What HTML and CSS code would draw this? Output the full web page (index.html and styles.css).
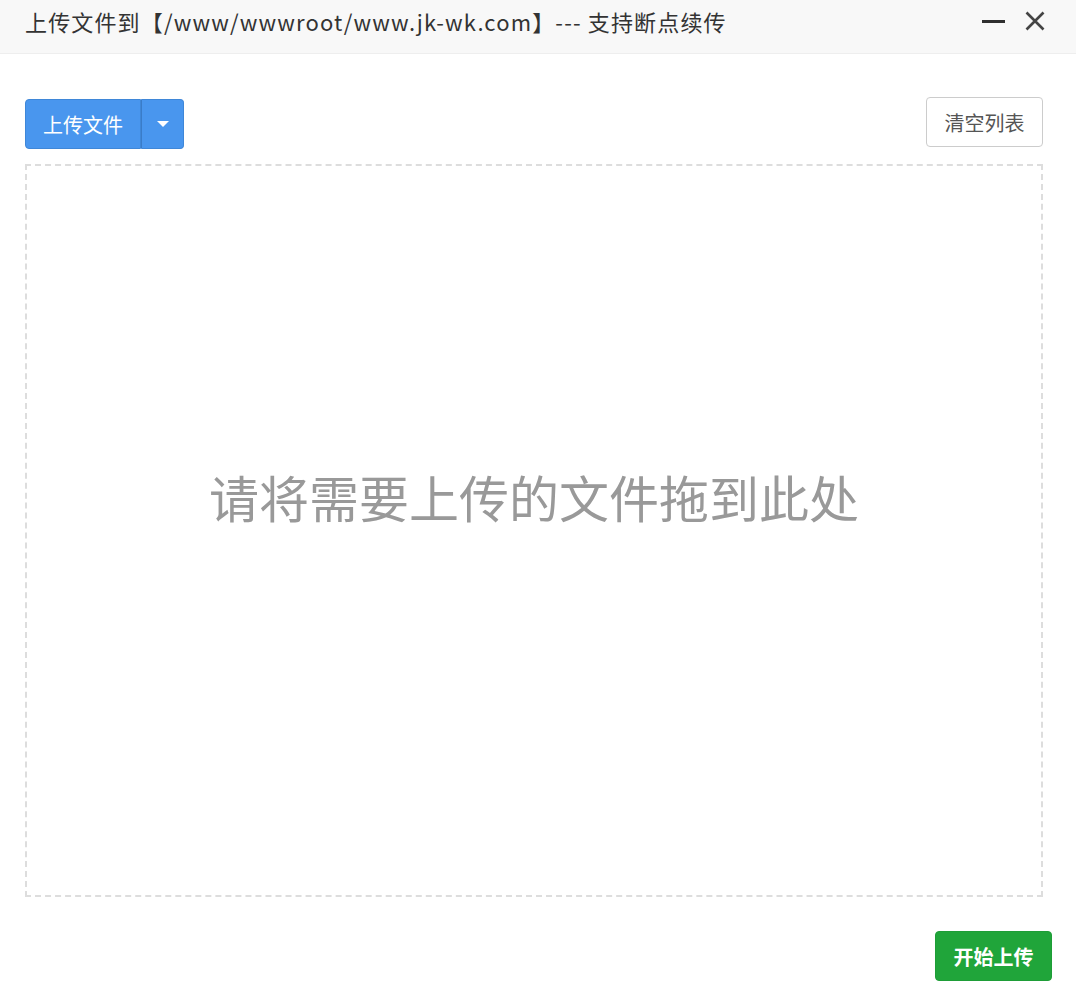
FILE: index.html
```html
<!DOCTYPE html>
<html lang="zh-CN">
<head>
    <meta charset="UTF-8">
    <title>上传文件</title>
    <link rel="stylesheet" href="styles.css">
</head>
<body>
    <div class="dialog">
        <div class="dialog-title">
            <span class="title-text">上传文件到【/www/wwwroot/www.jk-wk.com】--- 支持断点续传</span>
            <div class="title-tools">
                <span class="tool-min"></span>
                <svg class="tool-close" width="20" height="20" viewBox="0 0 20 20">
                    <path d="M1.5 1.5 L18.5 18.5 M18.5 1.5 L1.5 18.5" stroke="#444" stroke-width="2.6" fill="none"/>
                </svg>
            </div>
        </div>
        <div class="dialog-body">
            <div class="toolbar">
                <div class="btn-group">
                    <button class="btn btn-blue">上传文件</button>
                    <button class="btn btn-blue btn-caret"><span class="caret"></span></button>
                </div>
                <button class="btn btn-default">清空列表</button>
            </div>
            <div class="drop-zone">
                <span>请将需要上传的文件拖到此处</span>
            </div>
        </div>
        <div class="dialog-footer">
            <button class="btn btn-green">开始上传</button>
        </div>
    </div>
</body>
</html>
```

FILE: styles.css
```css
html, body {
    margin: 0;
    padding: 0;
    background: #fff;
}

body {
    font-family: "Noto Sans CJK SC", "Noto Sans", sans-serif;
    color: #333;
}

.dialog {
    width: 1076px;
    height: 993px;
    display: flex;
    flex-direction: column;
}

.dialog-title {
    height: 54px;
    background: #f8f8f8;
    border-bottom: 1px solid #eee;
    display: flex;
    align-items: center;
    justify-content: space-between;
    padding: 0 31px 0 25px;
    box-sizing: border-box;
}

.title-text {
    font-size: 22px;
    letter-spacing: 1.15px;
    color: #333;
    margin-top: -12px;
}

.title-tools {
    display: flex;
    align-items: center;
    gap: 20px;
    margin-top: -11px;
}

.tool-min {
    display: block;
    width: 23px;
    height: 3px;
    background: #2f2f2f;
}

.tool-close {
    display: block;
    width: 20px;
    height: 20px;
}

.dialog-body {
    padding: 43px 33px 0 25px;
}

.toolbar {
    display: flex;
    justify-content: space-between;
    align-items: flex-start;
    margin-bottom: 15px;
}

.btn-group {
    display: flex;
    margin-top: 2px;
}

.btn {
    font-family: inherit;
    border: 1px solid transparent;
    border-radius: 4px;
    cursor: pointer;
    font-size: 20px;
    padding: 0;
    height: 50px;
}

.btn-blue {
    background: #4996ee;
    border-color: #3f87d8;
    color: #fff;
    width: 116px;
    border-radius: 4px 0 0 4px;
}

.btn-caret {
    width: 43px;
    border-left: 1px solid #3a7cc8;
    border-radius: 0 4px 4px 0;
    display: flex;
    align-items: center;
    justify-content: center;
}

.caret {
    width: 0;
    height: 0;
    border-left: 6px solid transparent;
    border-right: 6px solid transparent;
    border-top: 6px solid #fff;
}

.btn-default {
    background: #fff;
    border-color: #ccc;
    color: #555;
    width: 117px;
}

.drop-zone {
    height: 733px;
    border: 2px dashed #ddd;
    box-sizing: border-box;
    display: flex;
    align-items: center;
    justify-content: center;
}

.drop-zone span {
    font-size: 50px;
    color: #999;
    margin-bottom: 70px;
}

.dialog-footer {
    display: flex;
    justify-content: flex-end;
    padding: 34px 24px 0 0;
}

.btn-green {
    background: #20a53a;
    border-color: #1e9d37;
    color: #fff;
    font-weight: bold;
    width: 117px;
}
```
